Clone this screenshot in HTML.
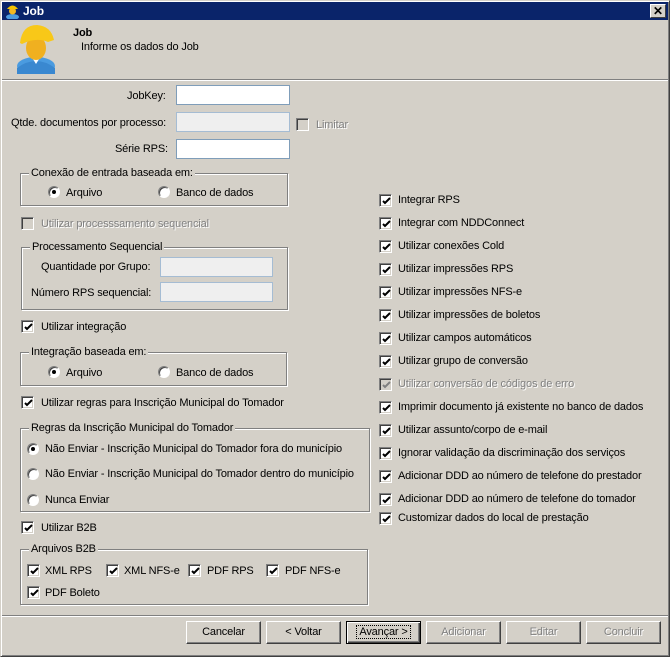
<!DOCTYPE html>
<html><head><meta charset="utf-8"><style>
*{margin:0;padding:0;box-sizing:border-box}
body{width:670px;height:657px;background:#d4d0c8;font-family:"Liberation Sans",sans-serif;font-size:11px;letter-spacing:-0.15px;color:#000;position:relative;overflow:hidden}
.a{position:absolute;white-space:nowrap;line-height:14px}
.win{position:absolute;left:0;top:0;width:670px;height:657px;border:1px solid;border-color:#d4d0c8 #404040 #404040 #d4d0c8;box-shadow:inset 1px 1px #fff,inset -1px -1px #808080}
.title{position:absolute;left:2px;top:2px;width:666px;height:18px;background:#0a246a;color:#fff;font-weight:bold;font-size:12px;line-height:18px;padding-left:21px}
.inp{position:absolute;height:20px;background:#fff;border:1px solid #7f9db9}
.inp.d{background:#efefef;border-color:#a5bcd3}
.cb{position:absolute;width:13px;height:13px;background:#fff;border:1px solid;border-color:#808080 #fff #fff #808080;box-shadow:inset 1px 1px #404040,inset -1px -1px #d4d0c8}
.cb.d{background:#d4d0c8}
.cb svg{position:absolute;left:1px;top:1px}
.rb{position:absolute;width:12px;height:12px;border-radius:50%;background:#fff;border:1px solid;border-color:#808080 #fff #fff #808080;box-shadow:inset 1px 1px #404040}
.rb.on::after{content:"";position:absolute;left:3px;top:3px;width:4px;height:4px;border-radius:50%;background:#000}
.gb{position:absolute;border:1px solid #808080;box-shadow:1px 1px 0 #fff,inset 1px 1px 0 #fff}
.gb span{position:absolute;top:-8px;left:8px;background:#d4d0c8;padding:0 2px;line-height:14px}
.g{color:#808080;text-shadow:1px 1px #fff}
.btn{position:absolute;top:621px;width:75px;height:23px;border:1px solid;border-color:#fff #404040 #404040 #fff;box-shadow:inset -1px -1px #808080;text-align:center;line-height:20px}
.btn.g{text-shadow:1px 1px #fff}
.sep{position:absolute;left:2px;width:666px;height:2px;border-top:1px solid #808080;border-bottom:1px solid #fff}
</style></head><body>
<div class="win"></div>
<div class="title">Job</div>
<svg style="position:absolute;left:5px;top:3px" width="15" height="16" viewBox="0 0 15 16"><ellipse cx="7.5" cy="14" rx="6.5" ry="3" fill="#4a9be0"/><circle cx="7.5" cy="8" r="3.5" fill="#f2b820"/><path d="M2 6 Q7.5 -1 13 6Z" fill="#f5c400"/></svg>
<div style="position:absolute;left:650px;top:4px;width:16px;height:14px;background:#d4d0c8;border:1px solid;border-color:#fff #404040 #404040 #fff;font-size:12px;line-height:12px;text-align:center;font-weight:bold">✕</div>

<svg style="position:absolute;left:13px;top:24px" width="46" height="50" viewBox="0 0 46 50"><ellipse cx="23" cy="42" rx="19" ry="9" fill="#4a9be0"/><path d="M4 44 Q23 30 42 44 L42 50 L4 50Z" fill="#3a88d0"/><path d="M18 32 L23 40 L28 32Z" fill="#fff"/><ellipse cx="23" cy="24" rx="10" ry="12" fill="#f0b020"/><path d="M7 19 Q9 1 24 1 Q38 2 41 16 L35 18 Q23 13 9 20Z" fill="#f8c818"/></svg>
<div class="a" style="left:73px;top:26px;font-weight:bold">Job</div>
<div class="a" style="left:81px;top:40px">Informe os dados do Job</div>
<div class="sep" style="top:79px"></div>

<div class="a" style="left:127px;top:89px">JobKey:</div>
<div class="inp" style="left:176px;top:85px;width:114px"></div>
<div class="a" style="left:11px;top:116px">Qtde. documentos por processo:</div>
<div class="inp d" style="left:176px;top:112px;width:114px"></div>
<div class="cb d" style="left:296px;top:118px"></div>
<div class="a g" style="left:316px;top:118px">Limitar</div>
<div class="a" style="left:115px;top:142px">Série RPS:</div>
<div class="inp" style="left:176px;top:139px;width:114px"></div>

<div class="gb" style="left:20px;top:173px;width:268px;height:33px"><span>Conexão de entrada baseada em:</span></div>
<div class="rb on" style="left:48px;top:186px"></div><div class="a" style="left:66px;top:186px">Arquivo</div>
<div class="rb" style="left:158px;top:186px"></div><div class="a" style="left:176px;top:186px">Banco de dados</div>

<div class="cb d" style="left:21px;top:217px"></div><div class="a g" style="left:41px;top:217px">Utilizar processsamento sequencial</div>

<div class="gb" style="left:21px;top:247px;width:267px;height:63px"><span>Processamento Sequencial</span></div>
<div class="a" style="left:41px;top:260px">Quantidade por Grupo:</div>
<div class="inp d" style="left:160px;top:257px;width:113px"></div>
<div class="a" style="left:31px;top:286px">Número RPS sequencial:</div>
<div class="inp d" style="left:160px;top:282px;width:113px"></div>

<div class="cb" style="left:21px;top:320px"><svg width="11" height="11"><path d="M2 5 L4 7 L9 2" stroke="#000" stroke-width="2" fill="none"/></svg></div><div class="a" style="left:41px;top:320px">Utilizar integração</div>

<div class="gb" style="left:20px;top:352px;width:267px;height:34px"><span>Integração baseada em:</span></div>
<div class="rb on" style="left:48px;top:366px"></div><div class="a" style="left:66px;top:366px">Arquivo</div>
<div class="rb" style="left:158px;top:366px"></div><div class="a" style="left:176px;top:366px">Banco de dados</div>

<div class="cb" style="left:21px;top:396px"><svg width="11" height="11"><path d="M2 5 L4 7 L9 2" stroke="#000" stroke-width="2" fill="none"/></svg></div><div class="a" style="left:41px;top:396px">Utilizar regras para Inscrição Municipal do Tomador</div>

<div class="gb" style="left:20px;top:428px;width:350px;height:84px"><span>Regras da Inscrição Municipal do Tomador</span></div>
<div class="rb on" style="left:27px;top:443px"></div><div class="a" style="left:45px;top:442px">Não Enviar - Inscrição Municipal do Tomador fora do município</div>
<div class="rb" style="left:27px;top:468px"></div><div class="a" style="left:45px;top:467px">Não Enviar - Inscrição Municipal do Tomador dentro do município</div>
<div class="rb" style="left:27px;top:494px"></div><div class="a" style="left:45px;top:493px">Nunca Enviar</div>

<div class="cb" style="left:21px;top:521px"><svg width="11" height="11"><path d="M2 5 L4 7 L9 2" stroke="#000" stroke-width="2" fill="none"/></svg></div><div class="a" style="left:41px;top:521px">Utilizar B2B</div>

<div class="gb" style="left:20px;top:549px;width:348px;height:56px"><span>Arquivos B2B</span></div>
<div class="cb" style="left:27px;top:564px"><svg width="11" height="11"><path d="M2 5 L4 7 L9 2" stroke="#000" stroke-width="2" fill="none"/></svg></div><div class="a" style="left:45px;top:564px">XML RPS</div>
<div class="cb" style="left:106px;top:564px"><svg width="11" height="11"><path d="M2 5 L4 7 L9 2" stroke="#000" stroke-width="2" fill="none"/></svg></div><div class="a" style="left:124px;top:564px">XML NFS-e</div>
<div class="cb" style="left:188px;top:564px"><svg width="11" height="11"><path d="M2 5 L4 7 L9 2" stroke="#000" stroke-width="2" fill="none"/></svg></div><div class="a" style="left:207px;top:564px">PDF RPS</div>
<div class="cb" style="left:266px;top:564px"><svg width="11" height="11"><path d="M2 5 L4 7 L9 2" stroke="#000" stroke-width="2" fill="none"/></svg></div><div class="a" style="left:285px;top:564px">PDF NFS-e</div>
<div class="cb" style="left:27px;top:586px"><svg width="11" height="11"><path d="M2 5 L4 7 L9 2" stroke="#000" stroke-width="2" fill="none"/></svg></div><div class="a" style="left:45px;top:586px">PDF Boleto</div>

<div class="cb" style="left:379px;top:194px"><svg width="11" height="11"><path d="M2 5 L4 7 L9 2" stroke="#000" stroke-width="2" fill="none"/></svg></div><div class="a" style="left:398px;top:193px">Integrar RPS</div>
<div class="cb" style="left:379px;top:217px"><svg width="11" height="11"><path d="M2 5 L4 7 L9 2" stroke="#000" stroke-width="2" fill="none"/></svg></div><div class="a" style="left:398px;top:216px">Integrar com NDDConnect</div>
<div class="cb" style="left:379px;top:240px"><svg width="11" height="11"><path d="M2 5 L4 7 L9 2" stroke="#000" stroke-width="2" fill="none"/></svg></div><div class="a" style="left:398px;top:239px">Utilizar conexões Cold</div>
<div class="cb" style="left:379px;top:263px"><svg width="11" height="11"><path d="M2 5 L4 7 L9 2" stroke="#000" stroke-width="2" fill="none"/></svg></div><div class="a" style="left:398px;top:262px">Utilizar impressões RPS</div>
<div class="cb" style="left:379px;top:286px"><svg width="11" height="11"><path d="M2 5 L4 7 L9 2" stroke="#000" stroke-width="2" fill="none"/></svg></div><div class="a" style="left:398px;top:285px">Utilizar impressões NFS-e</div>
<div class="cb" style="left:379px;top:309px"><svg width="11" height="11"><path d="M2 5 L4 7 L9 2" stroke="#000" stroke-width="2" fill="none"/></svg></div><div class="a" style="left:398px;top:308px">Utilizar impressões de boletos</div>
<div class="cb" style="left:379px;top:332px"><svg width="11" height="11"><path d="M2 5 L4 7 L9 2" stroke="#000" stroke-width="2" fill="none"/></svg></div><div class="a" style="left:398px;top:331px">Utilizar campos automáticos</div>
<div class="cb" style="left:379px;top:355px"><svg width="11" height="11"><path d="M2 5 L4 7 L9 2" stroke="#000" stroke-width="2" fill="none"/></svg></div><div class="a" style="left:398px;top:354px">Utilizar grupo de conversão</div>
<div class="cb d" style="left:379px;top:378px"><svg width="11" height="11"><path d="M2 5 L4 7 L9 2" stroke="#808080" stroke-width="2" fill="none"/></svg></div><div class="a g" style="left:398px;top:377px">Utilizar conversão de códigos de erro</div>
<div class="cb" style="left:379px;top:401px"><svg width="11" height="11"><path d="M2 5 L4 7 L9 2" stroke="#000" stroke-width="2" fill="none"/></svg></div><div class="a" style="left:398px;top:400px">Imprimir documento já existente no banco de dados</div>
<div class="cb" style="left:379px;top:424px"><svg width="11" height="11"><path d="M2 5 L4 7 L9 2" stroke="#000" stroke-width="2" fill="none"/></svg></div><div class="a" style="left:398px;top:423px">Utilizar assunto/corpo de e-mail</div>
<div class="cb" style="left:379px;top:447px"><svg width="11" height="11"><path d="M2 5 L4 7 L9 2" stroke="#000" stroke-width="2" fill="none"/></svg></div><div class="a" style="left:398px;top:446px">Ignorar validação da discriminação dos serviços</div>
<div class="cb" style="left:379px;top:470px"><svg width="11" height="11"><path d="M2 5 L4 7 L9 2" stroke="#000" stroke-width="2" fill="none"/></svg></div><div class="a" style="left:398px;top:469px">Adicionar DDD ao número de telefone do prestador</div>
<div class="cb" style="left:379px;top:493px"><svg width="11" height="11"><path d="M2 5 L4 7 L9 2" stroke="#000" stroke-width="2" fill="none"/></svg></div><div class="a" style="left:398px;top:492px">Adicionar DDD ao número de telefone do tomador</div>
<div class="cb" style="left:379px;top:512px"><svg width="11" height="11"><path d="M2 5 L4 7 L9 2" stroke="#000" stroke-width="2" fill="none"/></svg></div><div class="a" style="left:398px;top:511px">Customizar dados do local de prestação</div>

<div class="sep" style="top:615px"></div>
<div class="btn" style="left:186px">Cancelar</div>
<div class="btn" style="left:266px">&lt; Voltar</div>
<div class="btn" style="left:346px;border:1px solid #000;box-shadow:inset 1px 1px #fff,inset -1px -1px #404040,inset -2px -2px #808080"><span style="border:1px dotted #000;padding:0 2px">Avançar &gt;</span></div>
<div class="btn g" style="left:426px">Adicionar</div>
<div class="btn g" style="left:506px">Editar</div>
<div class="btn g" style="left:586px">Concluir</div>
</body></html>
